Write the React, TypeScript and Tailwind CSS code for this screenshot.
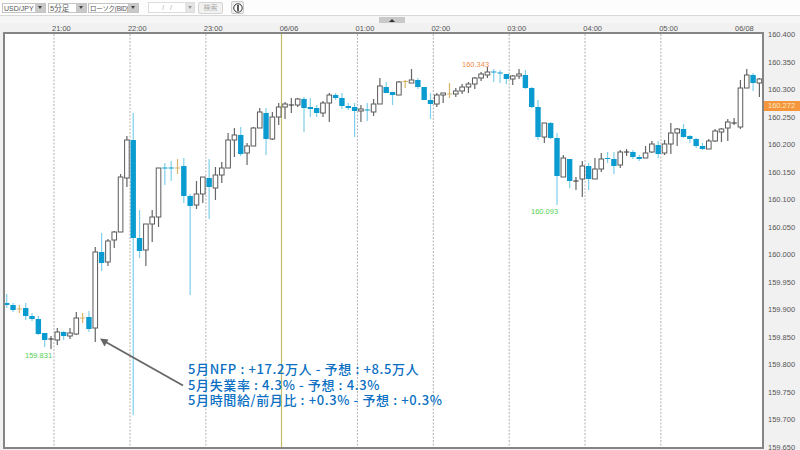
const candles: [number, number, number, number, string][] = [
  [303, 305, 294, 308, "b"], [305, 310, 303, 312, "b"], [309, 309, 305, 313, "o"], [308, 316, 303, 320, "b"],
  [316, 319, 313, 321, "b"], [319, 334, 316, 335, "b"], [333, 340, 333, 347, "b"], [339, 339, 336, 349, "d"],
  [332, 340, 328, 345, "w"], [332, 336, 331, 340, "b"], [333, 336, 328, 339, "w"], [318, 334, 312, 335, "w"],
  [318, 318, 313, 323, "o"], [317, 329, 311, 332, "b"], [252, 328, 247, 342, "w"], [252, 263, 233, 271, "b"],
  [241, 262, 239, 266, "w"], [232, 240, 231, 248, "w"], [177, 232, 174, 232, "w"], [140, 178, 136, 187, "w"],
  [140, 238, 113, 415, "b"], [238, 251, 210, 258, "b"], [224, 250, 224, 266, "w"], [217, 224, 210, 242, "w"],
  [168, 217, 168, 227, "w"], [167.5, 168.5, 163, 185, "b"], [167.5, 168.5, 161, 181, "b"], [168, 168, 159, 174, "o"],
  [166, 196, 158, 203, "b"], [196, 206, 194, 295, "b"], [194, 205, 181, 209, "w"], [177, 194, 177, 203, "w"],
  [178, 187, 159, 219, "b"], [175, 188, 167, 200, "w"], [168, 175, 162, 183, "w"], [140, 168, 133, 168, "w"],
  [135, 140, 128, 157, "w"], [135, 154, 127, 156, "b"], [146, 153, 143, 165, "w"], [128, 146, 127, 146, "w"],
  [112, 128, 108, 128, "w"], [113, 139, 108, 155, "b"], [117, 139, 112, 140, "w"], [107, 117, 103, 125, "w"],
  [104, 107, 102, 119, "w"], [105, 105, 98, 113, "d"], [99, 105, 98, 107, "w"], [99, 108, 97, 132, "b"],
  [107, 109, 98, 117, "b"], [108, 113, 105, 117, "b"], [103, 113, 101, 117, "w"], [95, 103, 93, 122, "w"],
  [95, 98, 93, 100, "b"], [98, 106, 93, 109, "b"], [106, 108, 103, 110, "b"], [107, 111, 103, 137, "b"],
  [109, 111, 105, 122, "w"], [109.5, 110.5, 103, 121, "b"], [104, 112, 99, 116, "w"], [86, 104, 78, 104, "w"],
  [87, 93, 82, 93, "b"], [92, 95, 92, 105, "b"], [82, 95, 81, 95, "w"], [81.5, 81.5, 80, 88, "o"],
  [80, 83, 69, 83, "w"], [80, 87, 78, 89, "b"], [87, 100, 87, 100, "b"], [100, 104, 93, 119, "b"],
  [95, 104, 93, 107, "w"], [93, 95, 93, 103, "w"], [94, 94, 83, 98, "o"], [91, 94, 88, 97, "w"],
  [87, 91, 84, 94, "w"], [84, 87, 82, 93, "w"], [78, 84, 77, 89, "w"], [74, 78, 72, 81, "w"],
  [72, 75, 67, 78, "w"], [71.5, 72.5, 69, 82, "b"], [72.5, 73.5, 70, 83, "b"], [74, 79, 74, 84, "b"],
  [76, 79, 75, 85, "w"], [74, 76, 69, 79, "w"], [75, 88, 70, 89, "b"], [88, 107, 87, 108, "b"],
  [107, 137, 100, 140, "b"], [123, 137, 123, 143, "w"], [123, 138, 122, 139, "b"], [138, 176, 133, 205, "b"],
  [158, 177, 155, 177, "w"], [159, 181, 159, 188, "b"], [181, 181, 177, 190, "d"], [166, 179, 161, 197, "w"],
  [166, 179, 163, 190, "b"], [169, 179, 158, 179, "w"], [159, 169, 153, 172, "w"], [158, 159, 152, 163, "b"],
  [159, 166, 152, 174, "b"], [152, 165, 150, 168, "w"], [152, 152, 149, 156, "d"], [152, 157, 150, 159, "b"],
  [157, 159, 155, 161, "b"], [153, 158, 146, 158, "w"], [144, 152, 141, 153, "w"], [145, 154, 141, 158, "b"],
  [144, 153, 140, 155, "w"], [133, 144, 123, 154, "w"], [129, 133, 128, 146, "w"], [129, 137, 124, 138, "b"],
  [136, 139, 135, 143, "b"], [139, 146, 138, 148, "b"], [146, 149, 143, 150, "b"], [141, 149, 139, 149, "w"],
  [131, 141, 129, 142, "w"], [129, 132, 128, 142, "w"], [122, 128, 119, 141, "w"], [123, 123, 118, 125, "d"],
  [88, 127, 80, 129, "w"], [75, 88, 69, 88, "w"], [75, 83, 73, 91, "b"], [79, 83, 78, 97, "w"],
];

const hours = ["21:00", "22:00", "23:00", "06/06", "01:00", "02:00", "03:00", "04:00", "05:00", "06/08"];
const prices = [
  "160.400", "160.350", "160.300", "160.250", "160.200", "160.150", "160.100", "160.050", "160.000",
  "159.950", "159.900", "159.850", "159.800", "159.750", "159.700", "159.650",
];
const grid = [54, 130, 205.8, 357.4, 433.3, 509.2, 585, 660.9];

function Select({ label, w }: { label: string; w: string }) {
  return (
    <div className="flex h-[10px] items-stretch border border-[#c4c4c4] bg-white">
      <span className={`${w} overflow-hidden whitespace-nowrap pl-[1px] leading-[9px] text-[#555]`}>{label}</span>
      <span className="flex w-[10px] items-center justify-center bg-[#c9c9c9]">
        <span className="border-x-[2.5px] border-t-[3px] border-x-transparent border-t-[#444]" />
      </span>
    </div>
  );
}

function Candle({ c, i }: { c: [number, number, number, number, string]; i: number }) {
  const [top, bottom, wt, wb, t] = c;
  const x = 51 + 6.325 * (i - 7);
  const wick = t === "b" ? "#7fcfea" : t === "o" ? "#d9b468" : "#666";
  return (
    <g>
      <line x1={x} x2={x} y1={wt} y2={wb} stroke={wick} strokeWidth={1.2} />
      {t === "b" && <rect x={x - 2.7} y={top} width={5.4} height={bottom - top} fill="#0a9bd0" />}
      {t === "w" && <rect x={x - 2.3} y={top} width={4.6} height={bottom - top} fill="#fff" stroke="#5a5a5a" strokeWidth={1} />}
      {t === "o" && <line x1={x - 2.7} x2={x + 2.7} y1={top} y2={top} stroke="#d9b468" strokeWidth={1} />}
      {t === "d" && <line x1={x - 2.7} x2={x + 2.7} y1={top} y2={top} stroke="#333" strokeWidth={1} />}
    </g>
  );
}

export default function App() {
  return (
    <div className="flex h-[450px] w-[800px] flex-col overflow-hidden bg-[#f1f1f1] font-['Liberation_Sans','Noto_Sans_CJK_JP',sans-serif]">
      {/* Toolbar */}
      <div className="flex h-[16px] items-center border-b border-[#d8d8d8] bg-[#fdfdfd] pl-[2px]">
        <Select label="USD/JPY" w="w-[32px] text-[7px]" />
        <div className="ml-[2px]"><Select label="5分足" w="w-[27px] text-[7.5px]" /></div>
        <div className="ml-[1px]"><Select label="ローソク(BID)" w="w-[39px] text-[6.5px] tracking-[-0.3px]" /></div>
        <div className="ml-[9px] flex h-[11px] items-stretch border border-[#dcdcdc] bg-white">
          <span className="w-[36px] text-center text-[7px] leading-[9px] text-[#aaa]">/&nbsp;&nbsp;&nbsp;/</span>
          <span className="flex w-[9px] items-center justify-center bg-[#e4e4e4]">
            <span className="border-x-[2.5px] border-t-[3px] border-x-transparent border-t-[#999]" />
          </span>
        </div>
        <button className="ml-[3px] h-[12px] w-[25px] rounded-[2px] border border-[#d4d4d4] bg-[#f2f2f2] text-[7px] leading-[10px] text-[#aaa]">検索</button>
        <button className="ml-[8px] flex h-[13px] w-[13px] items-center justify-center rounded-[2px] border border-[#ccc] bg-[#eee]">
          <svg width="10" height="10" viewBox="0 0 10 10">
            <circle cx="5" cy="5" r="4.2" fill="#fff" stroke="#333" strokeWidth="1" />
            <rect x="4.2" y="2" width="1.6" height="6" fill="#333" />
          </svg>
        </button>
      </div>

      {/* Collapse strip */}
      <div className="flex h-[7px] justify-center bg-[#f6f6f6] pr-[16px]">
        <div className="flex h-[6px] w-[26px] items-center justify-center self-end bg-[#c9c9c9]">
          <span className="border-x-[3px] border-b-[3px] border-x-transparent border-b-[#333]" />
        </div>
      </div>

      {/* Time axis */}
      <div className="flex h-[9px] pl-[52px] text-[7.5px] leading-[11px] text-[#555]">
        {hours.map((h) => (
          <span key={h} className="w-[75.9px] shrink-0">{h}</span>
        ))}
      </div>

      <div className="flex min-h-0 flex-1">
        {/* Chart */}
        <div className="relative ml-[3px] h-[417px] w-[761px] shrink-0 border-2 border-[#858585] bg-white">
          <svg width="757" height="413" viewBox="5 34 757 413" className="block">
            {grid.map((x, i) => (
              <line key={x} x1={x} x2={x} y1={34} y2={447} stroke={i < 3 ? "#cfcfcf" : "#b0b0b0"} strokeWidth={i < 3 ? 1.6 : 1} strokeDasharray="2 1.5" />
            ))}
            <line x1={281.5} x2={281.5} y1={34} y2={447} stroke="#c4bd6a" strokeWidth={1.2} />
            {candles.map((c, i) => (
              <Candle key={i} c={c} i={i} />
            ))}
            <text x={25} y={358} fontSize="7.5" fill="#55cf55">159.831</text>
            <text x={462} y={67} fontSize="7.5" fill="#f08a4b">160.343</text>
            <text x={531} y={214} fontSize="7.5" fill="#55cf55">160.093</text>
            <line x1={183} y1={385.5} x2={104} y2={341} stroke="#666" strokeWidth={1.8} />
            <path d="M100 338.5 L108.5 339.5 L104.5 346.5 Z" fill="#666" />
          </svg>
          <div className="absolute left-[183px] top-[327px] whitespace-nowrap font-['Noto_Sans_CJK_JP',sans-serif] text-[13px] font-medium leading-[15.6px] tracking-[0.62px] text-[#0a6fc2]">
            <div>5月NFP : +17.2万人 - 予想 : +8.5万人</div>
            <div>5月失業率 : 4.3% - 予想 : 4.3%</div>
            <div>5月時間給/前月比 : +0.3% - 予想 : +0.3%</div>
          </div>
        </div>

        {/* Price axis */}
        <div className="relative flex-1 pl-[4px] text-[7.5px] leading-[27.5px] text-[#555]">
          <div className="-mt-[11px]">
            {prices.map((p) => (
              <div key={p} className="h-[27.5px]">{p}</div>
            ))}
          </div>
          <div className="absolute left-0 top-[69px] h-[10px] w-full bg-[#f5963c] pl-[4px] text-[7.5px] leading-[10px] text-[#fde6c4]">160.272</div>
        </div>
      </div>
    </div>
  );
}
